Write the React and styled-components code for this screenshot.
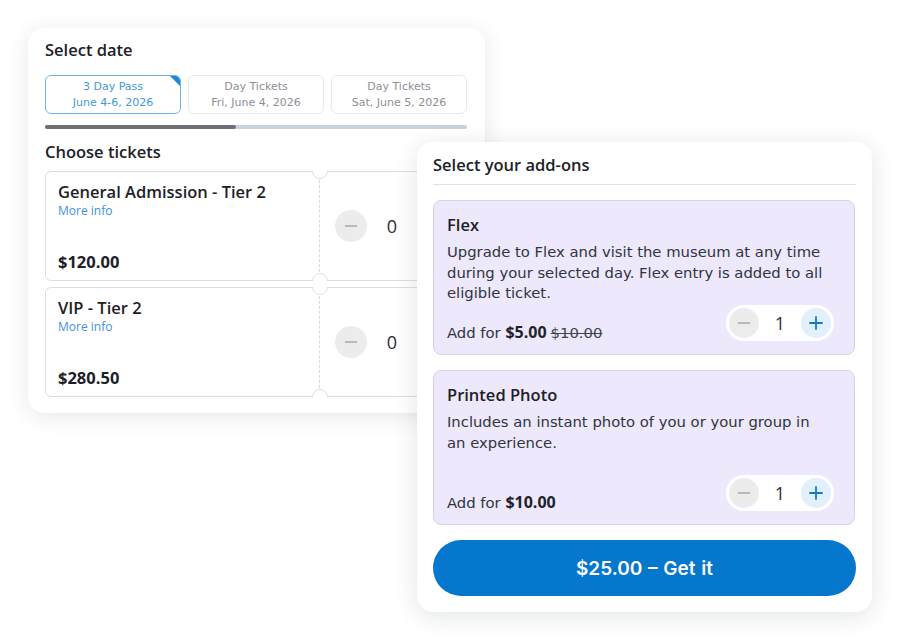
import React from 'react';
import styled, { createGlobalStyle } from 'styled-components';

const Global = createGlobalStyle`
  html, body { margin: 0; padding: 0; background: #fff; }
  body { font-family: "DejaVu Sans", "Open Sans", sans-serif; color: #1f2329; }
`;

const headFont = `"Open Sans", "DejaVu Sans", sans-serif`;

const dates = [
  { title: '3 Day Pass', sub: 'June 4-6, 2026', active: true },
  { title: 'Day Tickets', sub: 'Fri, June 4, 2026' },
  { title: 'Day Tickets', sub: 'Sat, June 5, 2026' },
];

const tickets = [
  { name: 'General Admission - Tier 2', price: '$120.00' },
  { name: 'VIP - Tier 2', price: '$280.50' },
];

const addons = [
  {
    name: 'Flex',
    text: 'Upgrade to Flex and visit the museum at any time during your selected day. Flex entry is added to all eligible ticket.',
    price: '$5.00',
    old: '$10.00',
  },
  {
    name: 'Printed Photo',
    text: 'Includes an instant photo of you or your group in an experience.',
    price: '$10.00',
  },
];

const Minus = ({ color = '#a4a8ae' }) => (
  <svg width="14" height="14" viewBox="0 0 14 14">
    <path d="M1.5 7h11" stroke={color} strokeWidth="1.6" strokeLinecap="round" />
  </svg>
);

const Plus = () => (
  <svg width="16" height="16" viewBox="0 0 16 16">
    <path d="M8 2v12M2 8h12" stroke="#1479cf" strokeWidth="1.8" strokeLinecap="round" />
  </svg>
);

const App = () => (
  <>
    <Global />
    <Stage>
      <DateCard>
        <Heading>Select date</Heading>
        <Tabs>
          {dates.map((d, i) => (
            <Tab key={i} active={d.active}>
              <span>{d.title}</span>
              <span>{d.sub}</span>
            </Tab>
          ))}
        </Tabs>
        <Scroll>
          <Thumb />
        </Scroll>
        <Heading>Choose tickets</Heading>
        <TicketList>
          {tickets.map((t) => (
            <Ticket key={t.name}>
              <Notch pos="top" />
              <Notch pos="bottom" />
              <TicketInfo>
                <Heading>{t.name}</Heading>
                <MoreInfo>More info</MoreInfo>
                <TicketPrice>{t.price}</TicketPrice>
              </TicketInfo>
              <TicketQty>
                <RoundBtn kind="minus"><Minus /></RoundBtn>
                <Count>0</Count>
              </TicketQty>
            </Ticket>
          ))}
        </TicketList>
      </DateCard>

      <AddonCard>
        <AddonHeading>Select your add-ons</AddonHeading>
        {addons.map((a) => (
          <Addon key={a.name}>
            <Heading>{a.name}</Heading>
            <AddonText>{a.text}</AddonText>
            <AddonFoot>
              <AddFor>
                Add for <b>{a.price}</b>
                {a.old && <s>{a.old}</s>}
              </AddFor>
              <Stepper>
                <RoundBtn kind="minus" small><Minus /></RoundBtn>
                <Count>1</Count>
                <RoundBtn kind="plus" small><Plus /></RoundBtn>
              </Stepper>
            </AddonFoot>
          </Addon>
        ))}
        <GetIt>$25.00 – Get it</GetIt>
      </AddonCard>
    </Stage>
  </>
);

const Stage = styled.div`
  position: relative;
  width: 900px;
  height: 641px;
  padding: 28px 0 0 28px;
  box-sizing: border-box;
`;

const DateCard = styled.div`
  width: 457px;
  height: 385px;
  box-sizing: border-box;
  padding: 11px 18px 0 17px;
  background: #fff;
  border-radius: 16px;
  box-shadow: 0 4px 22px rgba(20, 30, 50, 0.1);
  overflow: hidden;
`;

const Heading = styled.div`
  font-family: ${headFont};
  font-size: 16.5px;
  font-weight: 600;
  line-height: 21px;
  color: #1d2127;
`;

const Tabs = styled.div`
  display: grid;
  grid-template-columns: repeat(3, 136px);
  gap: 7px;
  margin-top: 15px;
`;

const Tab = styled.div`
  position: relative;
  height: 39px;
  box-sizing: border-box;
  border: 1px solid ${(p) => (p.active ? '#6bb5ec' : '#e6e8eb')};
  border-radius: 6px;
  display: flex;
  flex-direction: column;
  align-items: center;
  justify-content: center;
  gap: 2px;
  font-size: 11px;
  line-height: 14px;
  color: ${(p) => (p.active ? '#3f99de' : '#8c9096')};
  overflow: hidden;
  &::after {
    content: '';
    display: ${(p) => (p.active ? 'block' : 'none')};
    position: absolute;
    top: 0;
    right: 0;
    border-top: 10px solid #1f86d6;
    border-left: 10px solid transparent;
  }
`;

const Scroll = styled.div`
  height: 4px;
  margin: 11px 0 12px;
  border-radius: 2px;
  background: #c9d2de;
`;

const Thumb = styled.div`
  width: 191px;
  height: 100%;
  border-radius: 2px;
  background: #6c7076;
`;

const TicketList = styled.div`
  display: flex;
  flex-direction: column;
  gap: 6px;
  margin-top: 9px;
`;

const Ticket = styled.div`
  position: relative;
  height: 110px;
  box-sizing: border-box;
  border: 1px solid #dcdee2;
  border-radius: 6px;
  display: grid;
  grid-template-columns: 274px 1fr;
`;

const Notch = styled.span`
  position: absolute;
  left: 266px;
  ${(p) => (p.pos === 'top' ? 'top: -9px;' : 'bottom: -9px;')}
  width: 16px;
  height: 16px;
  box-sizing: border-box;
  border: 1px solid #dcdee2;
  border-radius: 50%;
  background: #fff;
  clip-path: ${(p) => (p.pos === 'top' ? 'inset(8px -1px -1px -1px)' : 'inset(-1px -1px 8px -1px)')};
`;

const TicketInfo = styled.div`
  display: flex;
  flex-direction: column;
  margin: 8px 0;
  padding: 1px 12px 0;
  border-right: 1px dashed #d6d9dd;
`;

const MoreInfo = styled.div`
  margin-top: 1px;
  font-family: ${headFont};
  font-size: 12px;
  font-weight: 500;
  line-height: 16px;
  color: #3f8fe6;
`;

const TicketPrice = styled(Heading)`
  margin-top: auto;
  font-weight: 700;
`;

const TicketQty = styled.div`
  display: flex;
  align-items: center;
  padding-left: 15px;
  gap: 18px;
`;

const RoundBtn = styled.div`
  width: ${(p) => (p.small ? '30px' : '32px')};
  height: ${(p) => (p.small ? '30px' : '32px')};
  border-radius: 50%;
  display: flex;
  align-items: center;
  justify-content: center;
  background: ${(p) => (p.kind === 'plus' ? '#e2f0fd' : '#ececec')};
  flex-shrink: 0;
`;

const Count = styled.span`
  min-width: 14px;
  text-align: center;
  font-family: ${headFont};
  font-size: 18px;
  color: #2a2e35;
`;

const AddonCard = styled.div`
  position: absolute;
  left: 417px;
  top: 142px;
  width: 455px;
  height: 470px;
  box-sizing: border-box;
  padding: 12px 16px 0 16px;
  background: #fff;
  border-radius: 16px;
  box-shadow: 0 4px 24px rgba(20, 30, 50, 0.12);
  display: flex;
  flex-direction: column;
`;

const AddonHeading = styled(Heading)`
  padding-bottom: 9px;
  border-bottom: 1px solid #dfe1e4;
  margin-bottom: 15px;
`;

const Addon = styled.div`
  height: 155px;
  box-sizing: border-box;
  margin: 0 1px 15px 0;
  padding: 13px 13px 11px;
  background: #ede8fb;
  border: 1px solid #d8d4e8;
  border-radius: 8px;
  display: flex;
  flex-direction: column;
`;

const AddonText = styled.div`
  max-width: 380px;
  margin-top: 7px;
  font-size: 14.8px;
  line-height: 20.5px;
  color: #31363d;
`;

const AddonFoot = styled.div`
  margin-top: auto;
  display: flex;
  align-items: flex-end;
  justify-content: space-between;
  padding-right: 7px;
`;

const AddFor = styled.div`
  font-size: 14.8px;
  line-height: 20px;
  color: #31363d;
  b { font-family: ${headFont}; font-size: 16px; font-weight: 700; color: #1f2329; }
  s { margin-left: 4px; color: #41464d; }
`;

const Stepper = styled.div`
  display: flex;
  align-items: center;
  gap: 14px;
  padding: 3px;
  margin-bottom: 2px;
  background: #fff;
  border-radius: 20px;
`;

const GetIt = styled.button`
  height: 56px;
  border: none;
  border-radius: 28px;
  background: #0577cc;
  color: #fff;
  font-family: Inter, "Liberation Sans", sans-serif;
  font-size: 19px;
  font-weight: 600;
  word-spacing: 1px;
  cursor: pointer;
`;

export default App;
